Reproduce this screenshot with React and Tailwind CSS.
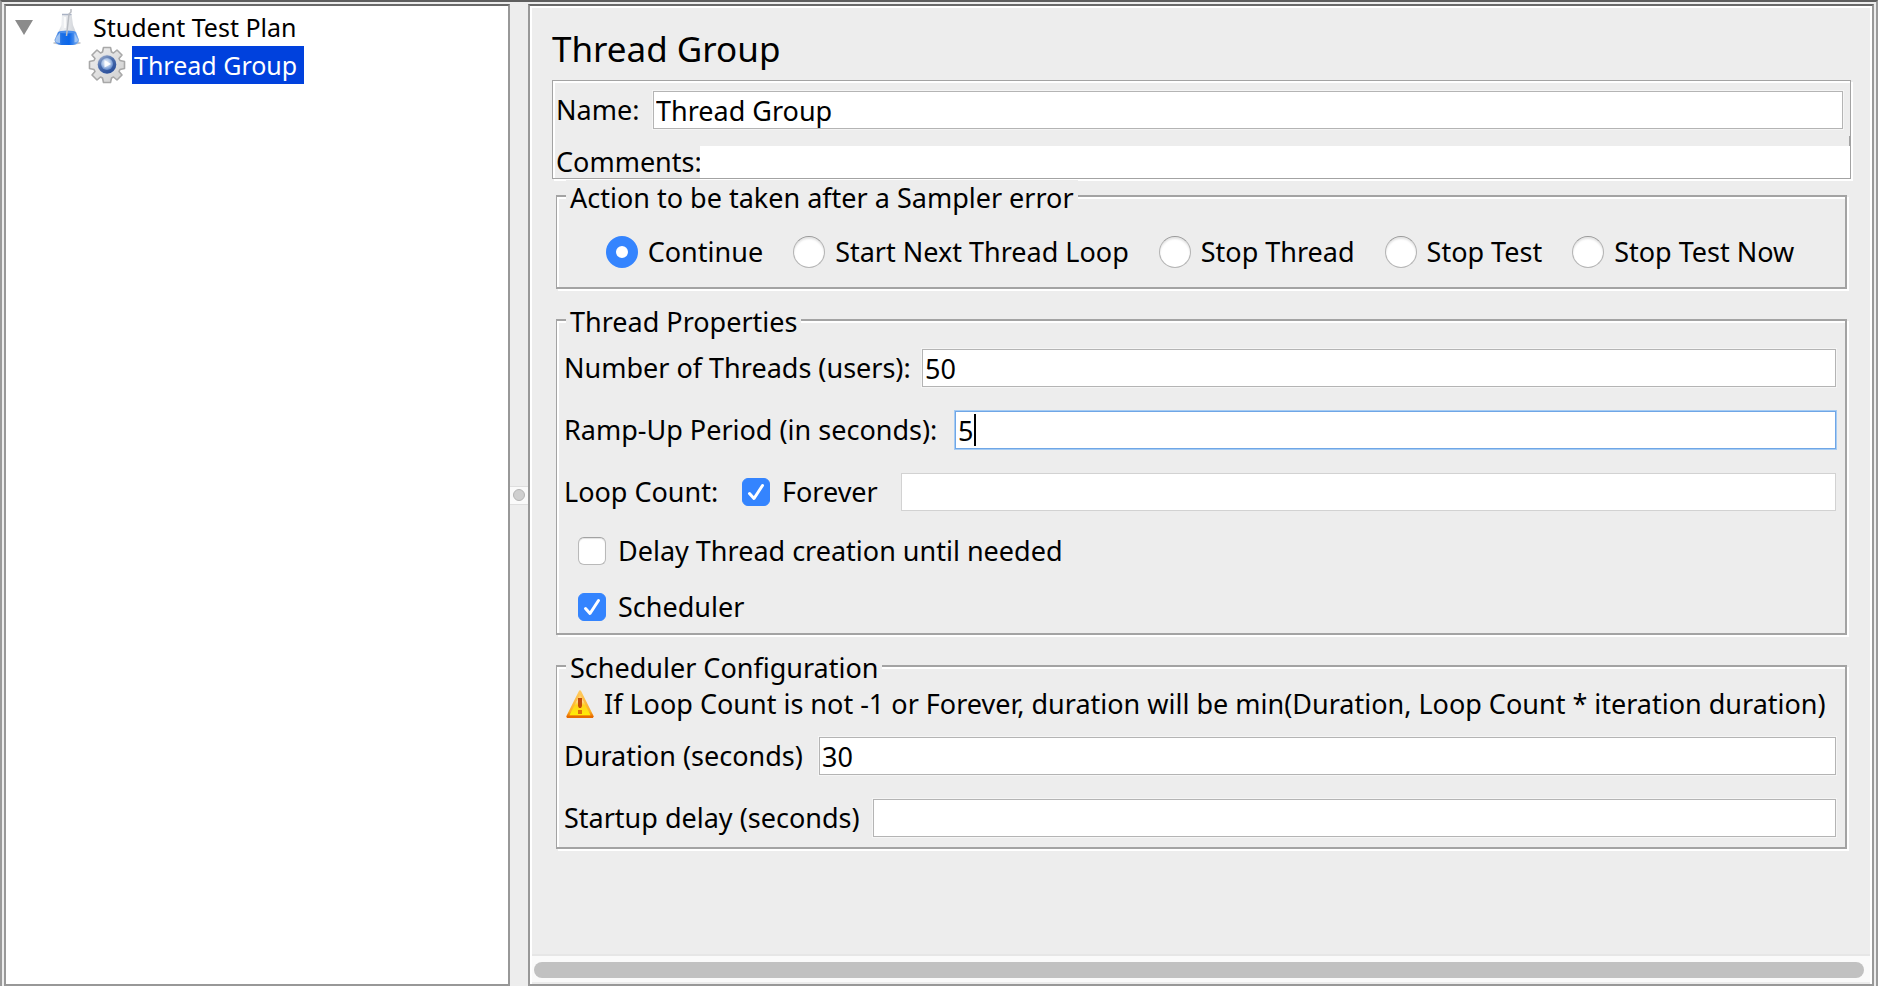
import { useState } from "react";

const FLAT_INPUT =
  "h-[38px] w-full min-w-0 bg-white border border-[#b4b4b4] pl-[2px] outline-none shadow-[0_0_0_1px_#f5f5f5]";

function FlaskIcon() {
  return (
    <svg viewBox="0 0 30 38" className="h-[38px] w-[30px] shrink-0" aria-hidden="true">
      <defs>
        <linearGradient id="glass" x1="0" x2="1">
          <stop offset="0" stopColor="#c3c8d0" />
          <stop offset="0.35" stopColor="#eceef1" />
          <stop offset="0.7" stopColor="#d3d6db" />
          <stop offset="1" stopColor="#bcc2ca" />
        </linearGradient>
        <linearGradient id="liquid" x1="0" x2="1">
          <stop offset="0" stopColor="#7fabea" />
          <stop offset="0.3" stopColor="#1b6fe6" />
          <stop offset="0.6" stopColor="#0a66ea" />
          <stop offset="1" stopColor="#8ab6f0" />
        </linearGradient>
      </defs>
      <ellipse cx="15" cy="35" rx="14" ry="1.8" fill="#9a9da3" opacity="0.6" />
      <path d="M10 6 L9.500 17 L2.500 32 Q3 36 8 36.500 L22 36.500 Q26.500 36 27 32 L21 17 L19.500 6 Z" fill="url(#glass)" opacity="0.85" />
      <path d="M6 24 Q15 22 24 24 L27 32 Q26.500 36.500 21 37 L9 37 Q3 36.500 2.500 32 Z" fill="url(#liquid)" />
      <path d="M4.500 29 L8 24.500 L8 35 Q3.500 34.500 3.500 32.500 Z" fill="#bcd5f5" opacity="0.75" />
      <path d="M22.500 25 L26 32 Q25.500 34 22.500 34.500 Z" fill="#b3d0f6" opacity="0.8" />
      <ellipse cx="15" cy="24" rx="8.500" ry="1.500" fill="#4d90ec" />
      <path d="M10 6.500 H19.500" stroke="#a9b2c4" strokeWidth="1.500" />
      <path d="M14.500 28 L17 6 L19 4 V1" fill="none" stroke="#b9bcc2" strokeWidth="1.500" />
      <path d="M13 9 V20" stroke="#ffffff" strokeWidth="1.500" />
    </svg>
  );
}

function GearIcon() {
  return (
    <svg viewBox="0 0 38 38" className="size-[38px] shrink-0" aria-hidden="true">
      <defs>
        <linearGradient id="gearBody" x1="0" y1="0" x2="1" y2="1">
          <stop offset="0" stopColor="#f0f0f0" />
          <stop offset="1" stopColor="#cfcfcf" />
        </linearGradient>
        <linearGradient id="gearRing" x1="0" y1="0" x2="0.600" y2="1">
          <stop offset="0" stopColor="#a9b6cf" />
          <stop offset="0.500" stopColor="#4a6cab" />
          <stop offset="1" stopColor="#2a4f9a" />
        </linearGradient>
        <radialGradient id="gearCore" cx="0.450" cy="0.400" r="0.700">
          <stop offset="0" stopColor="#f4f8fd" />
          <stop offset="0.450" stopColor="#b4c9e8" />
          <stop offset="1" stopColor="#3f6fc0" />
        </radialGradient>
      </defs>
      <path
        d="M14.500 6 L15.500 1.500 H22.500 L23.500 6 L25.500 7 L29 4 L34 9 L31 12.500 L32 14.500 L36.500 15.500 V22.500 L32 23.500 L31 25.500 L34 29 L29 34 L25.500 31 L23.500 32 L22.500 36.500 H15.500 L14.500 32 L12.500 31 L9 34 L4 29 L7 25.500 L6 23.500 L1.500 22.500 V15.500 L6 14.500 L7 12.500 L4 9 L9 4 L12.500 7 Z"
        fill="url(#gearBody)"
        stroke="#a8a8a8"
        strokeWidth="1.600"
        strokeLinejoin="round"
      />
      <circle cx="19" cy="18.500" r="10" fill="#d9dce2" />
      <circle cx="19" cy="18.500" r="9.300" fill="url(#gearRing)" />
      <circle cx="19" cy="18" r="6" fill="url(#gearCore)" />
      <path d="M16.500 14 L23 18 L16.500 21.500 Z" fill="#ffffff" opacity="0.900" />
    </svg>
  );
}

function WarningIcon() {
  return (
    <svg viewBox="0 0 28 28" className="size-7 shrink-0" aria-hidden="true">
      <defs>
        <linearGradient id="warn" x1="0" y1="0" x2="0" y2="1">
          <stop offset="0" stopColor="#ffc24a" />
          <stop offset="0.400" stopColor="#ffd98a" />
          <stop offset="0.550" stopColor="#ffd21c" />
          <stop offset="1" stopColor="#fff000" />
        </linearGradient>
        <linearGradient id="warnEdge" x1="0" y1="0" x2="0" y2="1">
          <stop offset="0" stopColor="#ffc95e" />
          <stop offset="0.800" stopColor="#fbb024" />
          <stop offset="1" stopColor="#ea6c00" />
        </linearGradient>
      </defs>
      <path d="M14 1.500 L26.500 26.500 H1.500 Z" fill="url(#warn)" stroke="url(#warnEdge)" strokeWidth="2.400" strokeLinejoin="round" />
      <path d="M1 27 H27" stroke="#e76a00" strokeWidth="2" />
      <path d="M12 8 H16 V16 L15 18 H13 L12 16 Z" fill="#c24a08" />
      <path d="M12 20 H16 V24 H12 Z" fill="#e0700a" />
    </svg>
  );
}

function Group({ title, className, children }) {
  return (
    <fieldset className="mx-1 min-w-0 border-2 border-l border-[#a3a3a3] pl-[7px] pr-[9px] shadow-[inset_2px_2px_0_#fff,2px_2px_0_#fff]">
      <legend className="ml-[2px] bg-[#ededed] px-1 pt-1 leading-7">{title}</legend>
      <div className={className}>{children}</div>
    </fieldset>
  );
}

function Check({ label, checked, onChange }) {
  return (
    <label className="flex h-8 shrink-0 items-center gap-3">
      <span className="grid size-7 place-items-center *:col-start-1 *:row-start-1">
        <input
          type="checkbox"
          checked={checked}
          onChange={onChange}
          className="size-7 appearance-none rounded-md border border-[#b9b9b9] border-t-[#a2a2a2] bg-white shadow-[inset_0_1px_1px_#e2e2e2] checked:border-[#3484fe] checked:bg-[#3484fe] checked:shadow-none"
        />
        {checked && (
          <svg viewBox="0 0 28 28" className="pointer-events-none size-7" aria-hidden="true">
            <path d="M7.500 15.500 L12 20.500 L20.500 7.500" fill="none" stroke="#fff" strokeWidth="3" strokeLinecap="round" strokeLinejoin="round" />
          </svg>
        )}
      </span>
      {label}
    </label>
  );
}

const ACTIONS = ["Continue", "Start Next Thread Loop", "Stop Thread", "Stop Test", "Stop Test Now"];

export default function App() {
  const [action, setAction] = useState("Continue");
  const [name, setName] = useState("Thread Group");
  const [comments, setComments] = useState("");
  const [threads, setThreads] = useState("50");
  const [ramp, setRamp] = useState("5");
  const [forever, setForever] = useState(true);
  const [loops, setLoops] = useState("");
  const [delayed, setDelayed] = useState(false);
  const [scheduler, setScheduler] = useState(true);
  const [duration, setDuration] = useState("30");
  const [startup, setStartup] = useState("");

  return (
    <div className="flex min-h-screen border-x-2 border-t-2 border-x-[#9a9a9a] border-t-[#5e5e5e] bg-[#ededed] px-[2px] pt-[2px] font-['Noto_Sans',sans-serif] text-[27px] leading-8 whitespace-nowrap text-black">
      <nav aria-label="Test plan" className="w-[506px] shrink-0 border-2 border-[#989898] border-t-[#696969] bg-white pt-[2px] text-[25px]">
        <ul>
          <li>
            <div className="flex h-[38px] items-center pl-[9px]">
              <button type="button" aria-label="Collapse Student Test Plan" className="mr-[19px]">
                <svg viewBox="0 0 18 15" className="h-[15px] w-[18px]" aria-hidden="true">
                  <path d="M0 0 H18 L9 15 Z" fill="#8b8b8b" />
                </svg>
              </button>
              <FlaskIcon />
              <span className="ml-[11px]">Student Test Plan</span>
            </div>
            <ul>
              <li className="flex h-[38px] items-center pl-[82px]">
                <GearIcon />
                <a href="#thread-group" className="ml-[6px] bg-[#0041dd] pr-[7px] pl-[2px] leading-[38px] text-white">
                  Thread Group
                </a>
              </li>
            </ul>
          </li>
        </ul>
      </nav>

      <div className="flex w-[18px] shrink-0 items-center">
        <div className="grid h-[19px] w-full place-items-center border-y border-[#dedede] bg-[#fafafa]">
          <span className="size-3 rounded-full border border-[#b4b4b4] bg-[#cfcfcf]" />
        </div>
      </div>

      <main id="thread-group" className="flex min-w-0 flex-1 flex-col border-2 border-[#989898] border-t-[#696969]">
        <div className="flex flex-1 flex-col border-x-2 border-t-2 border-white">
          <div className="flex-1 pr-[19px] pl-5">
            <h1 className="pt-[10px] text-[35px] leading-[62px]">Thread Group</h1>

            <section className="border border-[#a3a3a3] pt-[10px] pl-[3px] shadow-[inset_2px_2px_0_#fff,2px_2px_0_#fff]">
              <div className="flex items-center pr-[7px]">
                <label htmlFor="name" className="w-[97px] shrink-0">Name:</label>
                <input id="name" value={name} onChange={(e) => setName(e.target.value)} className={FLAT_INPUT} />
              </div>
              <div className="mt-[7px] h-[10px] border-r border-[#a3a3a3]" />
              <div className="flex items-center">
                <label htmlFor="comments" className="w-[144px] shrink-0">Comments:</label>
                <input id="comments" value={comments} onChange={(e) => setComments(e.target.value)} className="h-8 w-full min-w-0 bg-white pl-[2px] outline-none" />
              </div>
            </section>

            <div className="mt-px flex flex-col gap-[15px]">
              <Group title="Action to be taken after a Sampler error" className="flex justify-center gap-[30px] pt-6 pb-[19px]">
                {ACTIONS.map((a) => (
                  <label key={a} className="flex items-center gap-[10px]">
                    <input
                      type="radio"
                      name="action"
                      checked={action === a}
                      onChange={() => setAction(a)}
                      className="size-8 shrink-0 appearance-none rounded-full border border-[#b5b5b5] border-t-[#999] bg-white shadow-[inset_0_2px_2px_#e4e4e4] checked:border-[10px] checked:border-[#3484fe] checked:shadow-none"
                    />
                    {a}
                  </label>
                ))}
              </Group>

              <Group title="Thread Properties" className="flex flex-col gap-6 pt-[13px] pb-[10px]">
                <div className="flex items-center">
                  <label htmlFor="threads" className="w-[358px] shrink-0">Number of Threads (users):</label>
                  <input id="threads" value={threads} onChange={(e) => setThreads(e.target.value)} className={FLAT_INPUT} />
                </div>
                <div className="flex items-center">
                  <label htmlFor="ramp" className="w-[391px] shrink-0">Ramp-Up Period (in seconds):</label>
                  <div className="relative min-w-0 flex-1">
                    <input
                      id="ramp"
                      value={ramp}
                      onChange={(e) => setRamp(e.target.value)}
                      className="block h-[38px] w-full border border-[#6fa6e6] bg-white pl-[2px] shadow-[0_0_0_1px_#a5cbf3] outline-none"
                    />
                    <span className="absolute top-[3px] left-[19px] h-8 w-[2px] bg-black" />
                  </div>
                </div>
                <div className="flex items-center">
                  <label htmlFor="loops" className="w-[178px] shrink-0">Loop Count:</label>
                  <div className="w-[159px] shrink-0">
                    <Check label="Forever" checked={forever} onChange={() => setForever(!forever)} />
                  </div>
                  <input
                    id="loops"
                    value={loops}
                    disabled={forever}
                    onChange={(e) => setLoops(e.target.value)}
                    className="h-[38px] w-full min-w-0 border border-[#d2d2d2] bg-white pl-[2px] outline-none"
                  />
                </div>
                <div className="flex pl-[14px]">
                  <Check label="Delay Thread creation until needed" checked={delayed} onChange={() => setDelayed(!delayed)} />
                </div>
                <div className="flex pl-[14px]">
                  <Check label="Scheduler" checked={scheduler} onChange={() => setScheduler(!scheduler)} />
                </div>
              </Group>

              <Group title="Scheduler Configuration" className="flex flex-col pt-[6px] pb-[10px]">
                <p className="flex items-center gap-[10px] pl-[2px]">
                  <WarningIcon />
                  If Loop Count is not -1 or Forever, duration will be min(Duration, Loop Count * iteration duration)
                </p>
                <div className="mt-[17px] flex flex-col gap-6">
                  <div className="flex items-center">
                    <label htmlFor="duration" className="w-[255px] shrink-0">Duration (seconds)</label>
                    <input id="duration" value={duration} onChange={(e) => setDuration(e.target.value)} className={FLAT_INPUT} />
                  </div>
                  <div className="flex items-center">
                    <label htmlFor="startup" className="w-[309px] shrink-0">Startup delay (seconds)</label>
                    <input id="startup" value={startup} onChange={(e) => setStartup(e.target.value)} className={FLAT_INPUT} />
                  </div>
                </div>
              </Group>
            </div>
          </div>

          <div className="border-y-2 border-[#e6e6e6] border-b-[#ececec] bg-[#fafafa] pt-[6px] pr-[6px] pb-1 pl-[2px]">
            <div className="h-4 rounded-full bg-[#c1c1c1]" />
          </div>
        </div>
      </main>
    </div>
  );
}
